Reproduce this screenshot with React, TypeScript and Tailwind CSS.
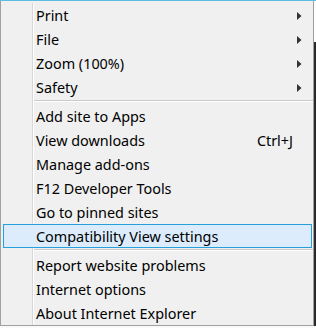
import React from 'react';

type Item = { label: string; arrow?: boolean; shortcut?: string; active?: boolean } | 'sep';

const ITEMS: Item[] = [
  { label: 'Print', arrow: true },
  { label: 'File', arrow: true },
  { label: 'Zoom (100%)', arrow: true },
  { label: 'Safety', arrow: true },
  'sep',
  { label: 'Add site to Apps' },
  { label: 'View downloads', shortcut: 'Ctrl+J' },
  { label: 'Manage add-ons' },
  { label: 'F12 Developer Tools' },
  { label: 'Go to pinned sites' },
  { label: 'Compatibility View settings', active: true },
  'sep',
  { label: 'Report website problems' },
  { label: 'Internet options' },
  { label: 'About Internet Explorer' },
];

function Arrow() {
  return (
    <svg width="5" height="8" viewBox="0 0 5 8" className="mr-[11px] shrink-0">
      <polygon points="0,0 4.5,4 0,8" fill="#333333" />
    </svg>
  );
}

function Row({ item }: { item: Exclude<Item, 'sep'> }) {
  const inner = (
    <>
      <span className="whitespace-nowrap">{item.label}</span>
      {item.shortcut && <span className="ml-auto mr-[20px] whitespace-nowrap">{item.shortcut}</span>}
      {item.arrow && <span className="ml-auto flex items-center"><Arrow /></span>}
    </>
  );

  if (item.active) {
    return (
      <div className="flex h-6 pl-[2px] pr-[1px]">
        <div className="flex flex-1 items-center border border-[#26a0da] bg-[#dcecfc] pl-[32px] pt-[2px]">
          {inner}
        </div>
      </div>
    );
  }

  return (
    <div className="flex h-6">
      <div className="w-[32px] shrink-0 border-r border-[#d7d7d7]" />
      <div className="flex flex-1 items-center border-l border-white pl-[2px] pt-[2px]">{inner}</div>
    </div>
  );
}

function Separator() {
  return (
    <div className="flex h-[5px]">
      <div className="w-[32px] shrink-0 border-r border-[#d7d7d7]" />
      <div className="flex-1 border-l border-white pt-px">
        <div className="h-px bg-[#cacaca]" />
        <div className="h-px bg-white" />
      </div>
    </div>
  );
}

export default function App() {
  return (
    <div
      className="flex h-[328px] w-[316px] flex-col bg-[#fafafa] text-[14.4px] text-black"
      style={{ fontFamily: '"Noto Sans", "Open Sans", sans-serif' }}
    >
      <div className="h-px bg-[#5cbde2]" />
      <div className="flex">
        <div className="flex h-[325px] w-[314px] flex-col border-x border-b border-[#a0a0a0] bg-[#f0f0f0] pt-[2px]">
          {ITEMS.map((item, i) => (item === 'sep' ? <Separator key={i} /> : <Row key={i} item={item} />))}
        </div>
        <div className="flex w-[2px] flex-col">
          <div className="h-[41px] bg-white" />
          <div className="h-[284px] bg-[#2a2a2a]" />
        </div>
      </div>
    </div>
  );
}
